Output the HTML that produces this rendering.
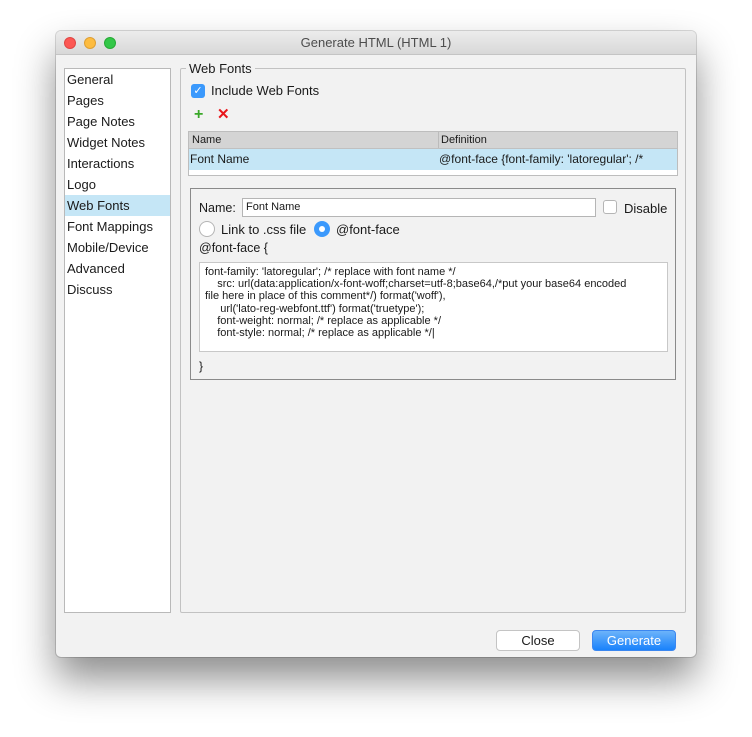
<!DOCTYPE html>
<html><head><meta charset="utf-8"><style>
*{box-sizing:border-box;margin:0;padding:0}
body{width:752px;height:737px;background:#fff;font-family:"Liberation Sans",sans-serif;font-size:13px;color:#1a1a1a;position:relative;overflow:hidden}
.win{position:absolute;left:56px;top:31px;width:640px;height:626px;background:#f2f2f2;border-radius:5px;box-shadow:0 22px 40px rgba(0,0,0,0.45),0 0 0 1px rgba(0,0,0,0.15);overflow:hidden}
.title{position:absolute;left:0;top:0;width:640px;height:24px;background:linear-gradient(#ececec,#d8d8d8);border-bottom:1px solid #c4c4c4;text-align:center;line-height:24px;color:#4d4d4d;font-size:13px}
.dot{position:absolute;top:6px;width:12px;height:12px;border-radius:50%}
.a{position:absolute}
.side{left:8px;top:37px;width:107px;height:545px;background:#fff;border:1px solid #b9b9b9}
.side div{height:21px;line-height:21px;padding-left:2px}
.sel{background:#c5e6f6}
.grp{left:124px;top:37px;width:506px;height:545px;border:1px solid #c2c2c2;border-radius:2px}
.btn{position:absolute;top:599px;height:21px;border-radius:4px;text-align:center;line-height:20px;font-size:13px}
.mono{font-size:11px;line-height:12.2px}
</style></head><body>
<div class="win">
<div class="title">Generate HTML (HTML 1)
<div class="dot" style="left:8px;background:#fc5753;border:1px solid #df4744"></div>
<div class="dot" style="left:28px;background:#fdbc40;border:1px solid #de9f34"></div>
<div class="dot" style="left:48px;background:#33c748;border:1px solid #27aa35"></div>
</div>
<div class="a side">
<div>General</div><div>Pages</div><div>Page Notes</div><div>Widget Notes</div><div>Interactions</div><div>Logo</div><div class="sel">Web Fonts</div><div>Font Mappings</div><div>Mobile/Device</div><div>Advanced</div><div>Discuss</div>
</div>
<div class="a grp"></div>
<div class="a" style="left:130px;top:30px;background:#f2f2f2;padding:0 3px">Web Fonts</div>
<div class="a" style="left:135px;top:53px;width:14px;height:14px;border-radius:3px;background:#3b99fc;color:#fff;font-size:11px;line-height:14px;text-align:center">✓</div>
<div class="a" style="left:155px;top:52px">Include Web Fonts</div>
<div class="a" style="left:138px;top:76px;color:#3aa829;font-weight:bold;font-size:16px;line-height:16px">+</div>
<div class="a" style="left:161px;top:76px;color:#e8161b;font-weight:bold;font-size:15px;line-height:16px">✕</div>
<div class="a" style="left:132px;top:100px;width:490px;height:45px;background:#fff;border:1px solid #bdbdbd">
<div style="height:17px;background:#d4d4d4;border-bottom:1px solid #c0c0c0;font-size:11px;line-height:16px;position:relative"><span style="padding-left:3px">Name</span><span style="position:absolute;left:249px;top:0;border-left:1px solid #bbb;padding-left:2px;height:16px">Definition</span></div>
<div style="height:21px;background:#c5e6f6;font-size:12px;line-height:21px;position:relative"><span style="padding-left:1px">Font Name</span><span style="position:absolute;left:250px">@font-face {font-family: 'latoregular'; /*</span></div>
</div>
<div class="a" style="left:134px;top:157px;width:486px;height:192px;border:1px solid #8a8a8a"></div>
<div class="a" style="left:143px;top:170px;font-size:12.5px">Name:</div>
<div class="a" style="left:186px;top:167px;width:354px;height:19px;background:#fff;border:1px solid #b5b5b5;font-size:11px;line-height:17px;padding-left:3px">Font Name</div>
<div class="a" style="left:547px;top:169px;width:14px;height:14px;border:1px solid #b5b5b5;border-radius:3px;background:#fff"></div>
<div class="a" style="left:568px;top:170px">Disable</div>
<div class="a" style="left:143px;top:190px;width:16px;height:16px;border-radius:50%;border:1px solid #b5b5b5;background:#fff"></div>
<div class="a" style="left:165px;top:191px">Link to .css file</div>
<div class="a" style="left:258px;top:190px;width:16px;height:16px;border-radius:50%;background:#3b99fc"><div style="position:absolute;left:5px;top:5px;width:6px;height:6px;border-radius:50%;background:#fff"></div></div>
<div class="a" style="left:280px;top:191px">@font-face</div>
<div class="a" style="left:143px;top:210px;font-size:12.5px">@font-face {</div>
<div class="a mono" style="left:143px;top:231px;width:469px;height:90px;background:#fff;border:1px solid #c8c8c8;padding:3px 0 0 5px;white-space:pre">font-family: 'latoregular'; /* replace with font name */
    src: url(data:application/x-font-woff;charset=utf-8;base64,/*put your base64 encoded
file here in place of this comment*/) format('woff'),
     url('lato-reg-webfont.ttf') format('truetype');
    font-weight: normal; /* replace as applicable */
    font-style: normal; /* replace as applicable */|</div>
<div class="a" style="left:143px;top:328px;font-size:12px">}</div>
<div class="btn" style="left:440px;width:84px;background:#fff;border:1px solid #c4c4c4">Close</div>
<div class="btn" style="left:536px;width:84px;background:linear-gradient(#6cb3fa,#1a82fb);color:#fff;border:1px solid #3b87f0">Generate</div>
</div>
</body></html>
